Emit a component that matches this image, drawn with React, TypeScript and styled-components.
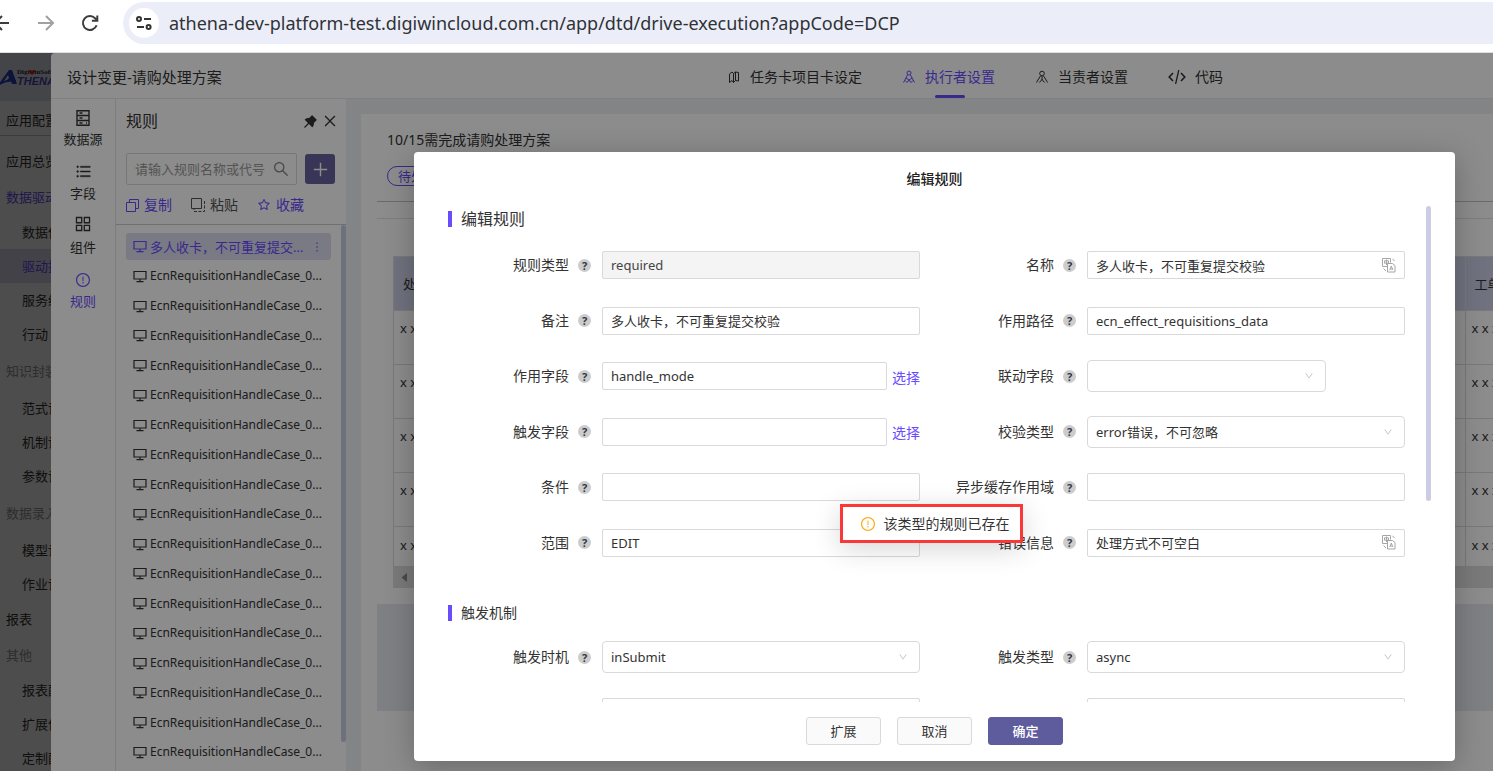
import React, { useId } from "react";
import styled, { createGlobalStyle, css } from "styled-components";
import {
  AiFillPushpin,
  AiOutlineAppstore,
  AiOutlineClose,
  AiOutlineDown,
  AiOutlineExclamationCircle,
  AiOutlineMore,
  AiOutlinePlus,
  AiOutlineSearch,
  AiOutlineStar,
  AiOutlineUnorderedList,
} from "react-icons/ai";

const FONT = '"Noto Sans", "Noto Sans CJK SC", sans-serif';
const PURPLE = "#6a4cff";
const INDIGO = "#5f5c9e";
const TEXT = "#333";
const LINE = "#d9d9d9";
const THUMB = "#cbcde4";

const GlobalStyle = createGlobalStyle`
  * { box-sizing: border-box; }
  body { margin: 0; overflow: hidden; font-family: ${FONT}; font-size: 13px; line-height: 20px; color: ${TEXT}; }
  button, input, select { font: inherit; color: inherit; margin: 0; }
  button { padding: 0; border: 0; background: none; cursor: pointer; white-space: nowrap; }
  h1, h2, p, ul { margin: 0; padding: 0; font-weight: 400; }
  ul { list-style: none; }
  a { color: inherit; text-decoration: none; }
  svg { display: block; flex: none; }
`;

const Page = styled.div`
  display: flex;
  flex-direction: column;
  height: 100vh;
`;

/* ---------- browser bar ---------- */

const BrowserBar = styled.header`
  display: flex;
  align-items: center;
  flex: none;
  height: 53px;
  padding-bottom: 7px;
  background: #fff;
  border-bottom: 1px solid #dcdfe0;
`;

const NavButtons = styled.div`
  display: flex;
  flex: none;
  gap: 26px;
  width: 123px;
  padding-right: 24px;
  justify-content: flex-end;
`;

const NavButton = styled.button<{ $dim?: boolean }>`
  color: ${(p) => (p.$dim ? "#a0a0a0" : "#3c3c3c")};
`;

const AddressBox = styled.label`
  display: flex;
  align-items: center;
  flex: 1;
  gap: 10px;
  height: 42px;
  padding-left: 6px;
  border-radius: 21px 0 0 21px;
  background: #ebeef8;
`;

const SiteBadge = styled.span`
  display: grid;
  place-items: center;
  width: 30px;
  height: 30px;
  border-radius: 50%;
  background: #fff;
`;

const AddressInput = styled.input`
  flex: 1;
  min-width: 0;
  padding: 0;
  border: 0;
  background: none;
  font-size: 18px;
  line-height: 24px;
  color: #303236;
  outline: none;
`;

/* ---------- stacked layers ---------- */

const Stage = styled.main`
  position: relative;
  flex: 1;
  min-height: 0;
  overflow: hidden;
  background: #fff;
`;

const Layer = styled.div`
  position: absolute;
  inset: 0;
  display: flex;
  background: rgba(0, 0, 0, 0.45);
`;

const DrawerLayer = styled(Layer)`
  padding-left: 51px;
`;

const ModalLayer = styled(Layer)`
  padding: 99px 38px 10px 414px;
`;

/* ---------- application menu ---------- */

const Menu = styled.nav`
  width: 200px;
`;

const MenuLogo = styled.div`
  height: 48px;
  background: #e4e6f2;
`;

const MenuTitle = styled.h2`
  height: 35px;
  padding-left: 6px;
  margin-bottom: 7px;
  font-size: 13px;
  line-height: 38px;
  border-bottom: 1px solid #c8c8c8;
`;

type MenuKind = "item" | "child" | "group";

const MenuRow = styled.li<{ $kind: MenuKind; $tone?: string; $active?: boolean }>`
  height: ${(p) => ({ item: 36, child: 34, group: 40 })[p.$kind]}px;
  line-height: ${(p) => ({ item: 36, child: 34, group: 40 })[p.$kind]}px;
  padding-left: ${(p) => (p.$kind === "child" ? 22 : 6)}px;
  color: ${(p) => p.$tone ?? TEXT};
  background: ${(p) => (p.$active ? "#dcdcf0" : "none")};
`;

/* ---------- drawer ---------- */

const Drawer = styled.section`
  display: flex;
  flex-direction: column;
  flex: 1;
  min-width: 0;
  border-radius: 4px 0 0 0;
  background: #fff;
  overflow: hidden;
`;

const DrawerHeader = styled.header`
  display: flex;
  align-items: center;
  justify-content: space-between;
  flex: none;
  height: 46px;
  padding: 2px 270px 0 16px;
  border-bottom: 1px solid #e8e8e8;
`;

const DrawerTitle = styled.h1`
  font-size: 15px;
`;

const TabBar = styled.div`
  display: flex;
  align-self: stretch;
  gap: 40px;
`;

const Tab = styled.button<{ $active?: boolean }>`
  position: relative;
  display: flex;
  align-items: center;
  gap: 9px;
  font-size: 14px;
  color: ${(p) => (p.$active ? PURPLE : TEXT)};
  ${(p) =>
    p.$active &&
    css`
      &::after {
        content: "";
        position: absolute;
        left: 50%;
        bottom: 0;
        width: 30px;
        height: 3px;
        margin-left: -14px;
        border-radius: 2px;
        background: ${PURPLE};
      }
    `}
`;

const DrawerBody = styled.div`
  display: flex;
  flex: 1;
  min-height: 0;
`;

const Rail = styled.nav`
  display: flex;
  flex-direction: column;
  flex: none;
  gap: 15px;
  width: 65px;
  padding-top: 11px;
  border-right: 1px solid #e4e4e4;
`;

const RailItem = styled.button<{ $active?: boolean }>`
  display: flex;
  flex-direction: column;
  align-items: center;
  justify-content: flex-end;
  gap: 3px;
  height: 39px;
  color: ${(p) => (p.$active ? PURPLE : TEXT)};
`;

const Panel = styled.section`
  display: flex;
  flex-direction: column;
  flex: none;
  width: 230px;
`;

const PanelTop = styled.div`
  flex: none;
  height: 126px;
  padding: 12px 8px 0 10px;
  border-bottom: 1px solid #ccc;
`;

const PanelHeading = styled.div`
  display: flex;
  align-items: center;
  gap: 3px;
  height: 20px;
`;

const PanelTitle = styled.h2`
  flex: 1;
  font-size: 16px;
`;

const SearchRow = styled.div`
  display: flex;
  align-items: center;
  justify-content: space-between;
  margin: 22px 3px 10px 0;
`;

const SearchBox = styled.label`
  display: flex;
  align-items: center;
  width: 171px;
  height: 32px;
  padding: 0 6px 0 8px;
  border: 1px solid ${LINE};
  border-radius: 2px;
  color: #888;
  input {
    flex: 1;
    min-width: 0;
    padding: 0;
    border: 0;
    background: none;
    outline: none;
  }
  input::placeholder {
    color: #999;
    opacity: 1;
  }
`;

const AddButton = styled.button`
  display: grid;
  place-items: center;
  width: 30px;
  height: 30px;
  border-radius: 3px;
  background: #66629f;
  color: #fff;
`;

const ActionRow = styled.div`
  display: flex;
  gap: 19px;
`;

const Action = styled.button<{ $plain?: boolean }>`
  display: flex;
  align-items: center;
  gap: 5px;
  font-size: 14px;
  color: ${(p) => (p.$plain ? "#555" : PURPLE)};
`;

const PanelScroll = styled.div`
  display: flex;
  align-items: flex-start;
  justify-content: space-between;
  flex: 1;
  min-height: 0;
  overflow: hidden;
  padding-left: 10px;
`;

const RuleList = styled.ul`
  display: flex;
  flex-direction: column;
  justify-content: space-between;
  width: 205px;
  min-height: 533px;
  margin-top: 8px;
`;

const RuleItem = styled.li<{ $active?: boolean }>`
  display: flex;
  align-items: center;
  gap: 3px;
  height: 27px;
  padding: 0 7px;
  border-radius: 3px;
  font-size: ${(p) => (p.$active ? 13 : 12)}px;
  white-space: nowrap;
  color: ${(p) => (p.$active ? PURPLE : TEXT)};
  background: ${(p) => (p.$active ? "#dedef0" : "none")};
  span {
    flex: 1;
  }
`;

const Thumb = styled.div<{ $length: number }>`
  flex: none;
  width: 5px;
  height: ${(p) => p.$length}px;
  border-radius: 3px;
  background: ${THUMB};
`;

/* ---------- page preview ---------- */

const Preview = styled.section`
  flex: 1;
  min-width: 0;
  padding: 15px 0 0 15px;
  background: #eef0f4;
  overflow: hidden;
`;

const PreviewCard = styled.div`
  height: 100%;
  padding: 16px 0 0 16px;
  background: #fff;
`;

const PreviewTitle = styled.p`
  padding-left: 10px;
  font-size: 14px;
`;

const StatusPill = styled.span`
  display: inline-block;
  height: 20px;
  margin: 16px 0 15px 10px;
  padding: 0 10px;
  border: 1px solid ${PURPLE};
  border-radius: 10px;
  line-height: 18px;
  color: ${PURPLE};
  vertical-align: top;
`;

const Rule = styled.hr<{ $soft?: boolean }>`
  height: 1px;
  margin: 0 0 16px;
  border: 0;
  background: ${(p) => (p.$soft ? "#e4e4e4" : "#c4c4c4")};
`;

const TableWrap = styled.div`
  margin: 37px 0 16px 16px;
`;

const DataTable = styled.table`
  width: 100%;
  table-layout: fixed;
  border-collapse: collapse;
  th,
  td {
    overflow: hidden;
    white-space: nowrap;
    text-align: left;
    font-weight: 400;
    border: 1px solid #dcdcdc;
    border-right: 0;
  }
  th {
    height: 54px;
    padding: 0 9px;
    background: #ccd0e8;
  }
  td {
    height: 54px;
    padding: 0 6px 20px;
  }
  tr:last-child td {
    height: 40px;
    padding-bottom: 4px;
  }
`;

const TableScroll = styled.div`
  height: 21px;
  padding: 6px 8px;
  background: #dedede;
  color: #888;
`;

const PreviewFooter = styled.div`
  height: 107px;
  background: #e6e9f0;
`;

/* ---------- rule dialog ---------- */

const Dialog = styled.section`
  position: relative;
  display: flex;
  flex-direction: column;
  flex: 1;
  min-width: 0;
  border-radius: 4px;
  background: #fff;
  box-shadow: 0 6px 30px rgba(0, 0, 0, 0.25);
`;

const DialogTitle = styled.h1`
  flex: none;
  height: 54px;
  line-height: 54px;
  font-size: 14px;
  font-weight: 500;
  text-align: center;
  color: #222;
`;

const DialogBody = styled.div`
  display: flex;
  flex: 1;
  min-height: 0;
  padding-right: 24px;
  overflow: hidden;
`;

const Form = styled.form`
  flex: 1;
  min-width: 0;
  padding: 0 21px;
`;

const SectionTitle = styled.h2<{ $small?: boolean }>`
  display: flex;
  align-items: center;
  gap: 9px;
  height: 26px;
  margin-left: 13px;
  font-size: ${(p) => (p.$small ? 14 : 16)}px;
  &::before {
    content: "";
    width: 4px;
    height: 16px;
    background: ${PURPLE};
  }
`;

const FieldGrid = styled.div<{ $minHeight?: number }>`
  display: grid;
  grid-template-columns: 1fr 1fr;
  grid-auto-rows: 32px;
  row-gap: 23px;
  align-content: space-between;
  min-height: ${(p) => p.$minHeight ?? 0}px;
  margin: 17px 0 41px;
  & + h2 + & {
    margin-top: 15px;
  }
`;

const FieldRow = styled.div`
  display: flex;
  align-items: center;
  gap: 11px;
  min-width: 0;
`;

const FieldLabel = styled.label`
  display: flex;
  align-items: center;
  justify-content: flex-end;
  flex: none;
  gap: 9px;
  width: 156px;
  font-size: 14px;
`;

const Help = styled.span`
  display: grid;
  place-items: center;
  width: 13px;
  height: 13px;
  border-radius: 50%;
  background: #ccc;
  font-size: 11px;
  line-height: 13px;
  font-weight: 700;
  color: #2c3a4a;
`;

const Control = styled.div`
  position: relative;
  display: flex;
  align-items: center;
  flex: 1;
  gap: 5px;
  min-width: 0;
`;

const TextInput = styled.input`
  flex: 1;
  min-width: 0;
  height: 28px;
  padding: 0 8px;
  border: 1px solid ${LINE};
  border-radius: 2px;
  background: #fff;
  outline: none;
  &:disabled {
    background: #f4f4f4;
    color: #444;
  }
`;

const SelectWrap = styled.div<{ $short?: boolean }>`
  position: relative;
  width: ${(p) => (p.$short ? "75%" : "100%")};
  svg {
    position: absolute;
    top: 11px;
    right: 12px;
    color: #bbb;
    pointer-events: none;
  }
`;

const Select = styled.select`
  display: block;
  width: 100%;
  height: 32px;
  padding: 0 8px;
  border: 1px solid ${LINE};
  border-radius: 4px;
  background: #fff;
  appearance: none;
  outline: none;
`;

const PickLink = styled.a`
  flex: none;
  padding-top: 3px;
  font-size: 14px;
  color: ${PURPLE};
`;

const TranslateButton = styled.button`
  position: absolute;
  right: 9px;
  color: #a6a6a6;
`;

const DialogFooter = styled.footer`
  display: flex;
  justify-content: center;
  flex: none;
  gap: 16px;
  padding: 15px 0 16px;
`;

const FooterButton = styled.button<{ $primary?: boolean }>`
  width: 75px;
  height: 28px;
  border: 1px solid ${(p) => (p.$primary ? INDIGO : LINE)};
  border-radius: 3px;
  background: ${(p) => (p.$primary ? INDIGO : "#fafafa")};
  color: ${(p) => (p.$primary ? "#fff" : TEXT)};
  font-weight: ${(p) => (p.$primary ? 500 : 400)};
`;

const Toast = styled.div`
  position: absolute;
  top: 352px;
  left: calc(50% - 95px);
  display: flex;
  align-items: center;
  gap: 8px;
  height: 39px;
  padding: 0 10px 0 17px;
  border: 3px solid #fb3838;
  background: #fff;
  box-shadow: 0 6px 28px rgba(0, 0, 0, 0.16);
  font-size: 14px;
  white-space: nowrap;
  svg {
    color: #faad14;
  }
`;

/* ---------- drawings ---------- */

const line = { fill: "none", stroke: "currentColor" } as const;

const BackArrow = () => (
  <svg width="18" height="18" viewBox="0 0 18 18" {...line} strokeWidth="2">
    <path d="M16 9H2M9 2L2 9l7 7" />
  </svg>
);
const ForwardArrow = () => (
  <svg width="18" height="18" viewBox="0 0 18 18" {...line} strokeWidth="2">
    <path d="M1 9h15M9 2l7 7-7 7" />
  </svg>
);
const Reload = () => (
  <svg width="18" height="18" viewBox="0 0 18 18" {...line} strokeWidth="2">
    <path d="M15.6 11.2A7 7 0 1 1 14.2 4.3L16 6.2" />
    <path d="M16.300 1.400v5.400h-5.400" />
  </svg>
);
const SiteSettings = () => (
  <svg width="16" height="14" viewBox="0 0 16 14" {...line} strokeWidth="2">
    <circle cx="3" cy="3" r="2" />
    <path d="M8 3h7M1 11h7" />
    <circle cx="12.600" cy="11" r="2" />
  </svg>
);
const Logo = () => (
  <svg width="90" height="48" viewBox="0 0 90 48">
    <path d="M-2 32L9 17h3l5 14h-5l-1-3H6l3-3-1-3-6 9z" fill="#2f45c8" />
    <path d="M-1 31c6-3 12-4 17-3" fill="none" stroke="#2f45c8" strokeWidth="2" />
    <text x="17" y="21" fontFamily="Liberation Serif, serif" fontSize="7" fontWeight="700" fill="#333">
      DigiwinSoft
    </text>
    <path d="M32 22l-3-3c-1-2 2-3 3-1 1-2 4-1 3 1z" fill="#f02020" />
    <text x="17" y="32" fontFamily="Liberation Sans, sans-serif" fontSize="11" fontWeight="700" fontStyle="italic" fill="#4a49c4">
      THENA
    </text>
  </svg>
);
const MapIcon = () => (
  <svg width="14" height="14" viewBox="0 0 14 14" {...line}>
    <path d="M2.500 4L5 2l1.500 1.500v9L5 10.500l-2.500 2zM6.500 3.500L8.500 2l3 .5v8.500l-3-.5-2 2M8.500 2v8.500" />
  </svg>
);
const ExecutorIcon = () => (
  <svg width="14" height="14" viewBox="0 0 14 14" {...line}>
    <circle cx="7" cy="3" r="2" />
    <path d="M5.500 5L1.500 12.500M8.500 5l4 7.500M4 8l3 2 3-2M3 10.500l2 2L7 10l2 2.500 2-2" />
  </svg>
);
const OwnerIcon = () => (
  <svg width="14" height="14" viewBox="0 0 14 14" {...line}>
    <circle cx="7" cy="3.500" r="2.300" />
    <path d="M5.500 6L3.500 9l-2 3.500M8.500 6l2 3 2 3.500M7 6v4M4.500 12.500L7 9.500l2.500 3" />
  </svg>
);
const CodeIcon = () => (
  <svg width="18" height="14" viewBox="0 0 18 14" {...line} strokeWidth="1.600">
    <path d="M5 3L1.200 7 5 11M13 3l3.800 4L13 11" />
    <path d="M10.800 0l-3.200 14" strokeWidth="1.300" />
  </svg>
);
const CabinetIcon = () => (
  <svg width="16" height="16" viewBox="0 0 16 16" {...line} strokeWidth="1.400">
    <path d="M2 0.700h12v14.600H2zM2 5.500h12M2 10.500h12M4.500 3h3M4.500 8h3M4.500 13h3M11 13h1" />
  </svg>
);
const CopyIcon = () => (
  <svg width="13" height="13" viewBox="0 0 13 13" {...line}>
    <path d="M3.500 3V0.500h9v9H10M0.500 3.500h9v9h-9z" />
  </svg>
);
const PasteIcon = () => (
  <svg width="14" height="14" viewBox="0 0 14 14" {...line}>
    <path d="M0.500 0.500h10v10H0.500z" />
    <path d="M13.500 3v10.500H3V11" strokeDasharray="3 1.500" />
  </svg>
);
const MonitorIcon = () => (
  <svg width="14" height="13" viewBox="0 0 14 13" {...line} strokeWidth="1.200">
    <path d="M1 1.500h12v7.500H1zM7 9v2.500M3.500 11.600h7" />
  </svg>
);
const TranslateIcon = () => (
  <svg width="14" height="15" viewBox="0 0 14 15" {...line}>
    <path d="M5 8.500H0.500v-8h8v4M5.500 5.500h5l2.500 2v6.500H5.500z" />
    <path d="M2.500 2.800h4v2.400h-4zM4.500 1.500v5.500M7.800 12L9.300 8l1.500 4M8.300 11h2M10.500 0.800l2 2.200M1.500 10.500l2.500 2.500" />
  </svg>
);
const ArrowLeft = () => (
  <svg width="6" height="9" viewBox="0 0 6 9">
    <path d="M6 0v9L0.500 4.500z" fill="currentColor" />
  </svg>
);

/* ---------- data ---------- */

const MUTED = "#999";

const menuRows: { text: string; kind: MenuKind; tone?: string; active?: boolean }[] = [
  { text: "应用总览", kind: "item" },
  { text: "数据驱动", kind: "item", tone: PURPLE },
  { text: "数据侦测", kind: "child" },
  { text: "驱动执行", kind: "child", tone: PURPLE, active: true },
  { text: "服务编排", kind: "child" },
  { text: "行动", kind: "child" },
  { text: "知识封装", kind: "group", tone: MUTED },
  { text: "范式设计", kind: "child" },
  { text: "机制设计", kind: "child" },
  { text: "参数设计", kind: "child" },
  { text: "数据录入", kind: "group", tone: MUTED },
  { text: "模型设计", kind: "child" },
  { text: "作业设计", kind: "child" },
  { text: "报表", kind: "item" },
  { text: "其他", kind: "item", tone: MUTED },
  { text: "报表配置", kind: "child" },
  { text: "扩展信息", kind: "child" },
  { text: "定制配置", kind: "child" },
];

const ruleNames = Array.from({ length: 17 }, () => "EcnRequisitionHandleCase_0...");

/* ---------- form fields ---------- */

interface FieldProps {
  label: string;
  value?: string;
  kind?: "text" | "select";
  disabled?: boolean;
  pick?: boolean;
  translate?: boolean;
  short?: boolean;
}

function Field({ label, value = "", kind = "text", disabled, pick, translate, short }: FieldProps) {
  const id = useId();
  return (
    <FieldRow>
      <FieldLabel htmlFor={id}>
        {label}
        <Help>?</Help>
      </FieldLabel>
      <Control>
        {kind === "select" ? (
          <SelectWrap $short={short}>
            <Select id={id} defaultValue={value}>
              <option value={value}>{value}</option>
            </Select>
            <AiOutlineDown size={10} />
          </SelectWrap>
        ) : (
          <TextInput id={id} defaultValue={value} disabled={disabled} />
        )}
        {pick && <PickLink href="#">选择</PickLink>}
        {translate && (
          <TranslateButton type="button" aria-label="多语言">
            <TranslateIcon />
          </TranslateButton>
        )}
      </Control>
    </FieldRow>
  );
}

function RuleDialog() {
  return (
    <Dialog role="dialog">
      <DialogTitle>编辑规则</DialogTitle>
      <DialogBody>
        <Form>
          <SectionTitle>编辑规则</SectionTitle>
          <FieldGrid $minHeight={310}>
            <Field label="规则类型" value="required" disabled />
            <Field label="名称" value="多人收卡，不可重复提交校验" translate />
            <Field label="备注" value="多人收卡，不可重复提交校验" />
            <Field label="作用路径" value="ecn_effect_requisitions_data" />
            <Field label="作用字段" value="handle_mode" pick />
            <Field label="联动字段" kind="select" short />
            <Field label="触发字段" pick />
            <Field label="校验类型" value="error错误，不可忽略" kind="select" />
            <Field label="条件" />
            <Field label="异步缓存作用域" />
            <Field label="范围" value="EDIT" />
            <Field label="错误信息" value="处理方式不可空白" translate />
          </FieldGrid>
          <SectionTitle $small>触发机制</SectionTitle>
          <FieldGrid>
            <Field label="触发时机" value="inSubmit" kind="select" />
            <Field label="触发类型" value="async" kind="select" />
            <Field label="" />
            <Field label="" />
          </FieldGrid>
        </Form>
        <Thumb $length={295} />
      </DialogBody>
      <DialogFooter>
        <FooterButton type="button">扩展</FooterButton>
        <FooterButton type="button">取消</FooterButton>
        <FooterButton type="button" $primary>
          确定
        </FooterButton>
      </DialogFooter>
      <Toast role="alert">
        <AiOutlineExclamationCircle size={16} />
        该类型的规则已存在
      </Toast>
    </Dialog>
  );
}

function RulePanel() {
  return (
    <Panel>
      <PanelTop>
        <PanelHeading>
          <PanelTitle>规则</PanelTitle>
          <button aria-label="固定">
            <AiFillPushpin size={17} color="#333" />
          </button>
          <button aria-label="关闭">
            <AiOutlineClose size={16} />
          </button>
        </PanelHeading>
        <SearchRow>
          <SearchBox>
            <input placeholder="请输入规则名称或代号" />
            <AiOutlineSearch size={18} />
          </SearchBox>
          <AddButton aria-label="新增">
            <AiOutlinePlus size={19} />
          </AddButton>
        </SearchRow>
        <ActionRow>
          <Action>
            <CopyIcon />
            复制
          </Action>
          <Action $plain>
            <PasteIcon />
            粘贴
          </Action>
          <Action>
            <AiOutlineStar size={14} />
            收藏
          </Action>
        </ActionRow>
      </PanelTop>
      <PanelScroll>
        <RuleList>
          <RuleItem $active>
            <MonitorIcon />
            <span>多人收卡，不可重复提交...</span>
            <AiOutlineMore size={14} />
          </RuleItem>
          {ruleNames.map((name, i) => (
            <RuleItem key={i}>
              <MonitorIcon />
              <span>{name}</span>
            </RuleItem>
          ))}
        </RuleList>
        <Thumb $length={517} />
      </PanelScroll>
    </Panel>
  );
}

function PagePreview() {
  return (
    <Preview>
      <PreviewCard>
        <PreviewTitle>10/15需完成请购处理方案</PreviewTitle>
        <StatusPill>待处理</StatusPill>
        <Rule />
        <Rule $soft />
        <TableWrap>
          <DataTable>
            <colgroup>
              <col />
              <col width="28" />
            </colgroup>
            <thead>
              <tr>
                <th>处理方式</th>
                <th>工单</th>
              </tr>
            </thead>
            <tbody>
              {[0, 1, 2, 3, 4].map((row) => (
                <tr key={row}>
                  <td>x x x</td>
                  <td>x x x</td>
                </tr>
              ))}
            </tbody>
          </DataTable>
          <TableScroll>
            <ArrowLeft />
          </TableScroll>
        </TableWrap>
        <PreviewFooter />
      </PreviewCard>
    </Preview>
  );
}

export default function App() {
  return (
    <Page>
      <GlobalStyle />
      <BrowserBar>
        <NavButtons>
          <NavButton aria-label="后退">
            <BackArrow />
          </NavButton>
          <NavButton aria-label="前进" $dim>
            <ForwardArrow />
          </NavButton>
          <NavButton aria-label="刷新">
            <Reload />
          </NavButton>
        </NavButtons>
        <AddressBox>
          <SiteBadge>
            <SiteSettings />
          </SiteBadge>
          <AddressInput
            aria-label="地址"
            defaultValue="athena-dev-platform-test.digiwincloud.com.cn/app/dtd/drive-execution?appCode=DCP"
          />
        </AddressBox>
      </BrowserBar>
      <Stage>
        <Menu>
          <MenuLogo>
            <Logo />
          </MenuLogo>
          <MenuTitle>应用配置</MenuTitle>
          <ul>
            {menuRows.map((row, i) => (
              <MenuRow key={i} $kind={row.kind} $tone={row.tone} $active={row.active}>
                {row.text}
              </MenuRow>
            ))}
          </ul>
        </Menu>
        <DrawerLayer>
          <Drawer>
            <DrawerHeader>
              <DrawerTitle>设计变更-请购处理方案</DrawerTitle>
              <TabBar>
                <Tab>
                  <MapIcon />
                  任务卡项目卡设定
                </Tab>
                <Tab $active>
                  <ExecutorIcon />
                  执行者设置
                </Tab>
                <Tab>
                  <OwnerIcon />
                  当责者设置
                </Tab>
                <Tab>
                  <CodeIcon />
                  代码
                </Tab>
              </TabBar>
            </DrawerHeader>
            <DrawerBody>
              <Rail>
                <RailItem>
                  <CabinetIcon />
                  数据源
                </RailItem>
                <RailItem>
                  <AiOutlineUnorderedList size={17} strokeWidth={24} />
                  字段
                </RailItem>
                <RailItem>
                  <AiOutlineAppstore size={20} />
                  组件
                </RailItem>
                <RailItem $active>
                  <AiOutlineExclamationCircle size={16} />
                  规则
                </RailItem>
              </Rail>
              <RulePanel />
              <PagePreview />
            </DrawerBody>
          </Drawer>
        </DrawerLayer>
        <ModalLayer>
          <RuleDialog />
        </ModalLayer>
      </Stage>
    </Page>
  );
}
